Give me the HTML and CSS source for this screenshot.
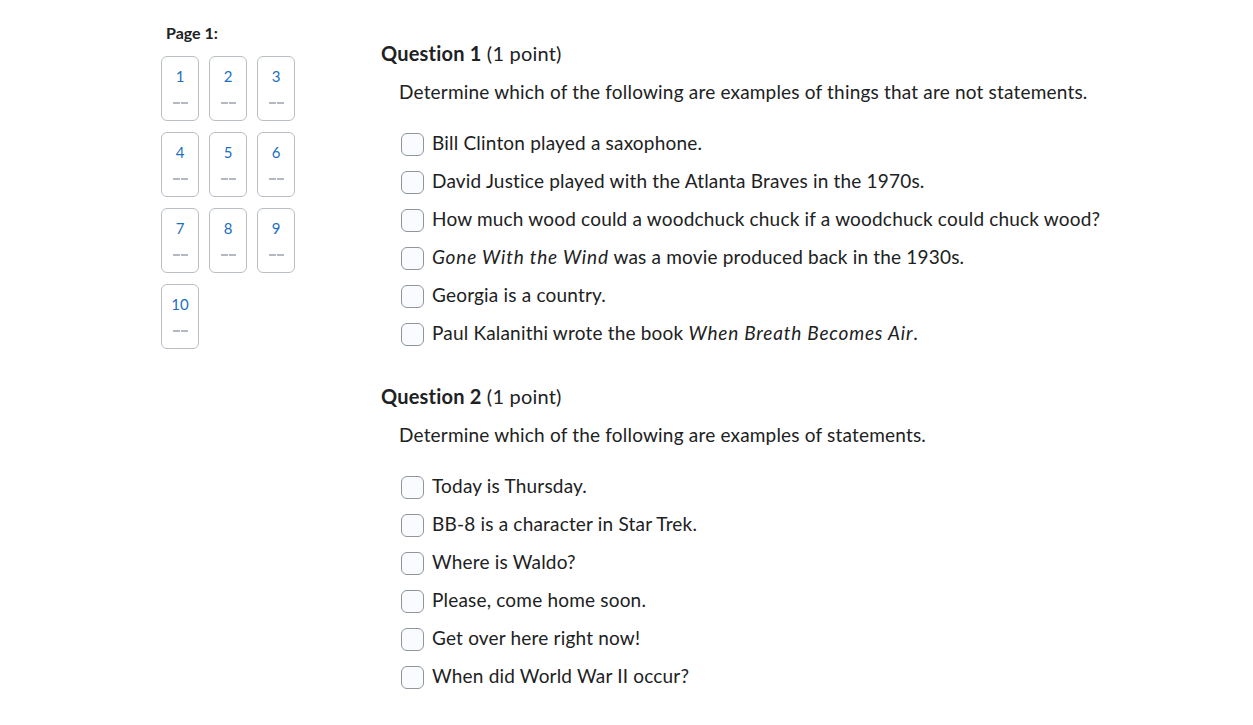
FILE: index.html
```html
<!DOCTYPE html>
<html>
<head>
<meta charset="utf-8">
<link rel="stylesheet" href="styles.css">
</head>
<body>
<div class="page">
  <aside class="nav">
    <div class="nav-label">Page 1:</div>
    <div class="tiles">
      <div class="tile"><span class="num">1</span><span class="dash"><i></i><i></i></span></div>
      <div class="tile"><span class="num">2</span><span class="dash"><i></i><i></i></span></div>
      <div class="tile"><span class="num">3</span><span class="dash"><i></i><i></i></span></div>
      <div class="tile"><span class="num">4</span><span class="dash"><i></i><i></i></span></div>
      <div class="tile"><span class="num">5</span><span class="dash"><i></i><i></i></span></div>
      <div class="tile"><span class="num">6</span><span class="dash"><i></i><i></i></span></div>
      <div class="tile"><span class="num">7</span><span class="dash"><i></i><i></i></span></div>
      <div class="tile"><span class="num">8</span><span class="dash"><i></i><i></i></span></div>
      <div class="tile"><span class="num">9</span><span class="dash"><i></i><i></i></span></div>
      <div class="tile"><span class="num">10</span><span class="dash"><i></i><i></i></span></div>
    </div>
  </aside>
  <main class="main">
    <section class="question">
      <h2 class="q-title"><b>Question 1</b> (1 point)</h2>
      <p class="q-desc">Determine which of the following are examples of things that are not statements.</p>
      <ul class="options">
        <li class="option"><span class="box"></span><span>Bill Clinton played a saxophone.</span></li>
        <li class="option"><span class="box"></span><span>David Justice played with the Atlanta Braves in the 1970s.</span></li>
        <li class="option"><span class="box"></span><span>How much wood could a woodchuck chuck if a woodchuck could chuck wood?</span></li>
        <li class="option"><span class="box"></span><span><em>Gone With the Wind</em> was a movie produced back in the 1930s.</span></li>
        <li class="option"><span class="box"></span><span>Georgia is a country.</span></li>
        <li class="option"><span class="box"></span><span>Paul Kalanithi wrote the book <em>When Breath Becomes Air</em>.</span></li>
      </ul>
    </section>
    <section class="question q2">
      <h2 class="q-title"><b>Question 2</b> (1 point)</h2>
      <p class="q-desc">Determine which of the following are examples of statements.</p>
      <ul class="options">
        <li class="option"><span class="box"></span><span>Today is Thursday.</span></li>
        <li class="option"><span class="box"></span><span>BB-8 is a character in Star Trek.</span></li>
        <li class="option"><span class="box"></span><span>Where is Waldo?</span></li>
        <li class="option"><span class="box"></span><span>Please, come home soon.</span></li>
        <li class="option"><span class="box"></span><span>Get over here right now!</span></li>
        <li class="option"><span class="box"></span><span>When did World War II occur?</span></li>
      </ul>
    </section>
  </main>
</div>
</body>
</html>
```

FILE: styles.css
```css
* { box-sizing: border-box; }
html, body { margin: 0; padding: 0; background: #ffffff; }
body {
  font-family: Lato, "Noto Sans", sans-serif;
  color: #202122;
  width: 1253px;
  height: 725px;
  overflow: hidden;
}
.page {
  display: flex;
  padding-left: 161px;
}
.nav {
  width: 220px;
  flex: none;
  padding-top: 23px;
}
.nav-label {
  font-size: 16px;
  font-weight: 700;
  line-height: 20px;
  padding-left: 5px;
  margin-bottom: 13px;
}
.tiles {
  display: grid;
  grid-template-columns: repeat(3, 38px);
  column-gap: 10px;
  row-gap: 11px;
}
.tile {
  height: 65px;
  border: 1px solid #b9bec5;
  border-radius: 6px;
  display: flex;
  flex-direction: column;
  align-items: center;
}
.num {
  color: #1c6fc0;
  font-size: 15px;
  line-height: 18px;
  margin-top: 10px;
}
.dash {
  display: flex;
  gap: 1px;
  margin-top: 17px;
}
.dash i {
  display: block;
  width: 7px;
  height: 2px;
  background: #b4b9c0;
}
.main {
  flex: 1;
  padding-top: 39px;
}
.q2 { margin-top: 31px; }
.q-title {
  margin: 0;
  font-size: 20px;
  line-height: 28px;
  font-weight: 400;
  letter-spacing: 0.2px;
}
.q-title b { font-weight: 700; }
.q-desc {
  margin: 11px 0 0 18px;
  font-size: 19px;
  line-height: 28px;
  letter-spacing: 0.19px;
}
.options {
  list-style: none;
  margin: 17px 0 0 20px;
  padding: 0;
}
.option {
  height: 38px;
  display: flex;
  align-items: center;
  font-size: 19px;
  letter-spacing: 0.19px;
}
.box {
  flex: none;
  width: 23px;
  height: 23px;
  border: 1px solid #8f959d;
  border-radius: 6px;
  background: #f9fbff;
  margin-right: 8px;
  margin-top: 5px;
}
em { font-style: italic; letter-spacing: 0.8px; }
```
